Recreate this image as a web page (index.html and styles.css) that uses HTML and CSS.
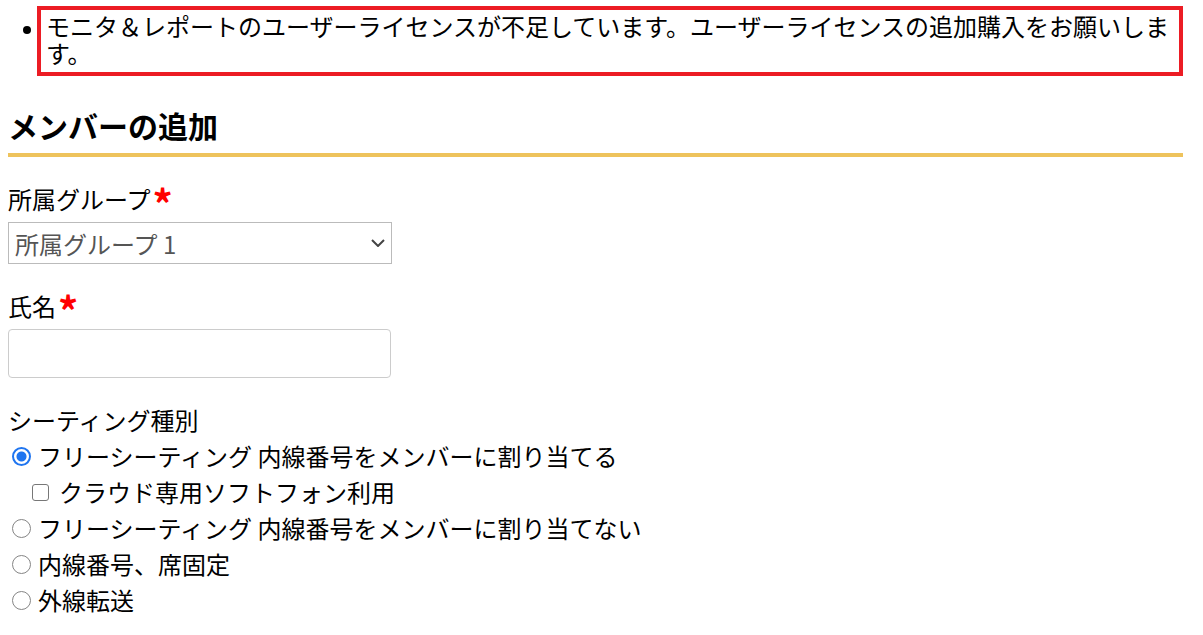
FILE: index.html
```html
<!DOCTYPE html>
<html lang="ja">
<head>
    <meta charset="UTF-8">
    <meta name="viewport" content="width=device-width, initial-scale=1.0">
    <title>メンバーの追加</title>
    <link rel="stylesheet" href="styles.css">
</head>
<body>
    <ul class="errors">
        <li>モニタ＆レポートのユーザーライセンスが不足しています。ユーザーライセンスの追加購入をお願いします。</li>
    </ul>

    <h2 class="page-title">メンバーの追加</h2>

    <form class="member-form">
        <div class="field">
            <label for="group">所属グループ<span class="required">*</span></label>
            <div class="select-wrap">
                <select id="group">
                    <option>所属グループ 1</option>
                    <option>所属グループ 2</option>
                </select>
                <svg class="chevron" width="14" height="8" viewBox="0 0 14 8">
                    <path d="M1 1l6 6 6-6" fill="none" stroke="#444" stroke-width="2"/>
                </svg>
            </div>
        </div>

        <div class="field">
            <label for="name">氏名<span class="required">*</span></label>
            <input type="text" id="name" class="text-input">
        </div>

        <div class="field seating">
            <div class="group-label">シーティング種別</div>
            <label class="option"><input type="radio" name="seating" checked><span class="mark radio"></span>フリーシーティング 内線番号をメンバーに割り当てる</label>
            <label class="option sub"><input type="checkbox"><span class="mark check"></span>クラウド専用ソフトフォン利用</label>
            <label class="option"><input type="radio" name="seating"><span class="mark radio"></span>フリーシーティング 内線番号をメンバーに割り当てない</label>
            <label class="option"><input type="radio" name="seating"><span class="mark radio"></span>内線番号、席固定</label>
            <label class="option"><input type="radio" name="seating"><span class="mark radio"></span>外線転送</label>
        </div>
    </form>
</body>
</html>
```

FILE: styles.css
```css
body {
    font-family: "Noto Sans CJK JP", "Noto Sans", sans-serif;
    font-size: 24px;
    line-height: 27px;
    color: #000;
    background: #fff;
    margin: 0;
    padding: 0 20px 0 8px;
}
.errors {
    margin: 6px 0 0;
    padding-left: 29px;
    list-style: none;
}
.errors li {
    position: relative;
    border: 4px solid #ec1c24;
    padding: 2px 4px 6px 5px;
}
.errors li::before {
    content: "";
    position: absolute;
    left: -18px;
    top: 16px;
    width: 8px;
    height: 8px;
    border-radius: 50%;
    background: #000;
}
.page-title {
    font-size: 30px;
    font-weight: bold;
    line-height: 36px;
    margin: 31px 0 0;
    padding-bottom: 10px;
    border-bottom: 4px solid #eec35c;
}
.field {
    margin-top: 28px;
}
.field label {
    display: block;
}
.required {
    color: #f00;
    font-weight: bold;
    font-size: 40px;
    line-height: 0;
    vertical-align: -11px;
    margin-left: 2px;
}
.select-wrap {
    position: relative;
    width: 384px;
    margin-top: 10px;
}
.select-wrap select {
    display: block;
    appearance: none;
    width: 384px;
    height: 42px;
    padding: 0 6px;
    font-family: inherit;
    font-size: 24px;
    color: #555;
    background: #fff;
    border: 1px solid #bbb;
    border-radius: 0;
}
.chevron {
    position: absolute;
    right: 7px;
    top: 17px;
}
.text-input {
    display: block;
    width: 383px;
    height: 49px;
    margin-top: 10px;
    box-sizing: border-box;
    border: 1px solid #ccc;
    border-radius: 4px;
    font-size: 24px;
}
.field.seating {
    margin-top: 24px;
}
.group-label {
    line-height: 35px;
}
.seating .option {
    display: flex;
    align-items: center;
    height: 36px;
}
.seating input {
    display: none;
}
.mark {
    flex: none;
    box-sizing: border-box;
    background: #fff;
}
.mark.radio {
    width: 19px;
    height: 19px;
    margin: 2px 7px 0 4px;
    border: 1.5px solid #858585;
    border-radius: 50%;
}
input:checked + .mark.radio {
    border: 2px solid #1f75f0;
    background: radial-gradient(circle, #1f75f0 0, #1f75f0 4.5px, #fff 5.5px);
}
.mark.check {
    width: 17px;
    height: 17px;
    margin: 2px 10px 0 24px;
    border: 1.5px solid #777;
    border-radius: 3px;
}
```
